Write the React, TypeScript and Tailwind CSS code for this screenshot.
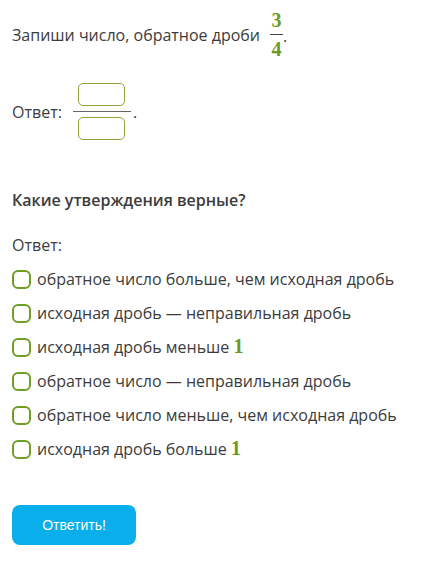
const FONT = { fontFamily: '"Open Sans", "Noto Sans", sans-serif' };
const SERIF = { fontFamily: '"Liberation Serif", "Times New Roman", serif' };

const OPTIONS: { text: string; one?: boolean }[] = [
  { text: "обратное число больше, чем исходная дробь" },
  { text: "исходная дробь — неправильная дробь" },
  { text: "исходная дробь меньше", one: true },
  { text: "обратное число — неправильная дробь" },
  { text: "обратное число меньше, чем исходная дробь" },
  { text: "исходная дробь больше", one: true },
];

function Num({ children }: { children: React.ReactNode }) {
  return (
    <span className="text-[20px] font-bold leading-none text-[#6b9a23]" style={SERIF}>
      {children}
    </span>
  );
}

export default function App() {
  return (
    <div className="min-h-screen w-[432px] bg-white text-[16px] text-[#3c3c3c]" style={FONT}>
      <div className="px-3 pt-[10px]">
        {/* Task 1 */}
        <div className="flex items-center">
          <span>Запиши число, обратное дроби</span>
          <span className="ml-[10px] inline-flex flex-col items-center">
            <Num>3</Num>
            <span className="my-[4px] h-px w-[13px] bg-[#444]" />
            <Num>4</Num>
          </span>
          <span className="self-center pt-[2px]">.</span>
        </div>

        <div className="mt-[24px] flex items-center">
          <span>Ответ:</span>
          <span className="ml-[11px] inline-flex flex-col items-center">
            <span className="h-[23px] w-[47px] rounded-[5px] border-[1.5px] border-[#8ea43a]" />
            <span className="my-[5px] h-px w-[58px] bg-[#666]" />
            <span className="h-[23px] w-[47px] rounded-[5px] border-[1.5px] border-[#8ea43a]" />
          </span>
          <span className="ml-[2px]">.</span>
        </div>

        {/* Task 2 */}
        <div className="mt-[48px] font-semibold">Какие утверждения верные?</div>
        <div className="mt-[21px]">Ответ:</div>

        <div className="mt-[11px] flex flex-col gap-[12px]">
          {OPTIONS.map((o) => (
            <label key={o.text} className="flex h-[22px] items-center">
              <span className="h-[19px] w-[19px] shrink-0 rounded-[6px] border-[2.5px] border-[#6f9e22]" />
              <span className="ml-[6px]">
                {o.text}
                {o.one && (
                  <>
                    {" "}
                    <Num>1</Num>
                  </>
                )}
              </span>
            </label>
          ))}
        </div>

        <button
          className="mt-[45px] h-[40px] w-[124px] rounded-[8px] bg-[#0aaeea] text-[14px] text-white"
          style={{ fontFamily: '"Liberation Sans", Arial, sans-serif' }}
        >
          Ответить!
        </button>
      </div>
    </div>
  );
}
